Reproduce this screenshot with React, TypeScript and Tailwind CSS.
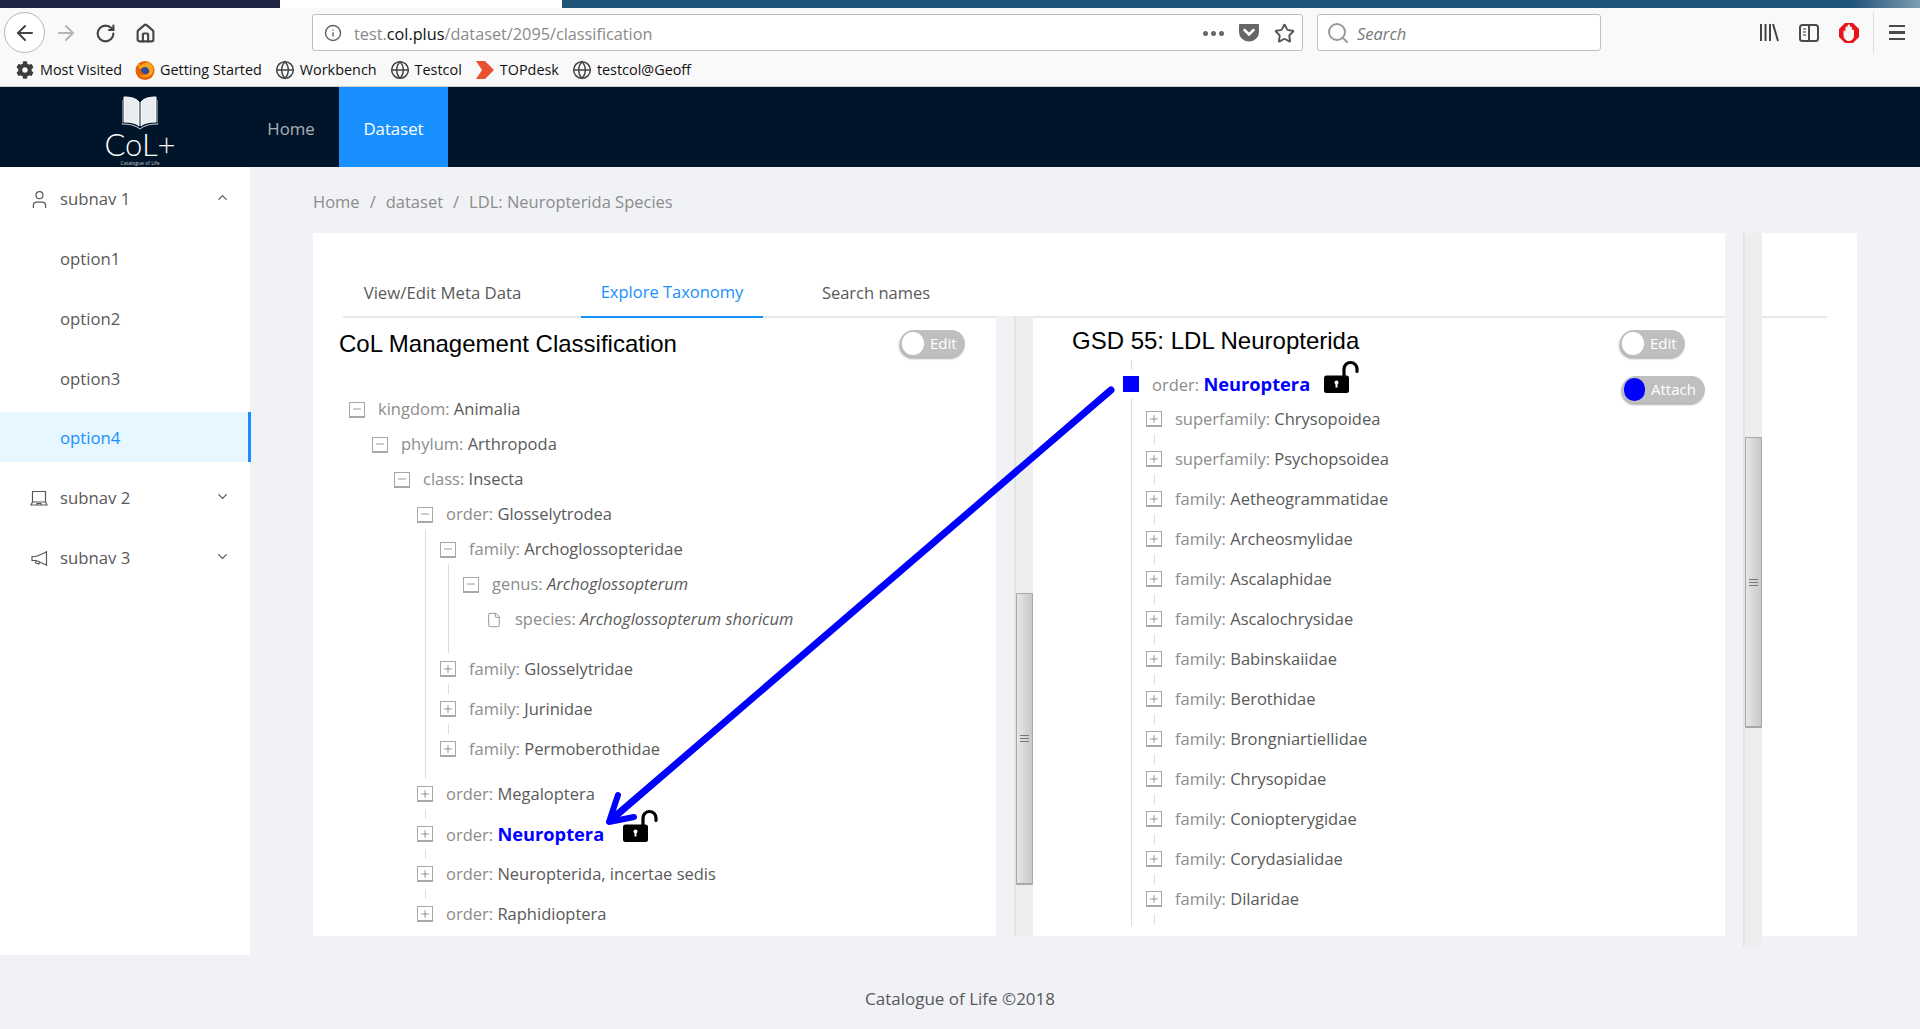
import type { ReactNode } from "react";
import { ArrowLeft, ArrowRight, RotateCw, Home, Info, Search, Star, User, ChevronUp, ChevronDown, File, Globe, Plus, Minus } from "lucide-react";
import { FaCog } from "react-icons/fa";

// 작은 아이콘들
function PocketIcon() {
  return (
    <svg viewBox="0 0 20 18" className="w-5 h-[18px]">
      <path d="M1 0h18a1 1 0 0 1 1 1v7a10 9.5 0 0 1-20 0V1a1 1 0 0 1 1-1z" fill="#666" />
      <path d="M5.5 6l4.5 4.5L14.500 6" fill="none" stroke="#fff" strokeWidth="2.500" strokeLinecap="round" />
    </svg>
  );
}

function FirefoxIcon() {
  return (
    <svg viewBox="0 0 20 20" className="w-5 h-5">
      <circle cx="10" cy="10.500" r="9.500" fill="#e66000" />
      <circle cx="10.500" cy="9.500" r="4.500" fill="#2c4a9e" />
      <path d="M3 3c2 1 2 3 3 3 2-3 6-5 10-2 3 3 3 8 0 11-4 3-9 3-12 0 3 1 8 1 10-2 1-3-1-6-4-6-2 0-3 1-4 2-2 0-3-3-3-6z" fill="#f8a51b" />
    </svg>
  );
}

function TopdeskIcon() {
  return (
    <svg viewBox="0 0 18 18" className="w-[18px] h-[18px]">
      <path d="M0 0h9l9 9-9 9H0l6-9z" fill="#ea5030" />
    </svg>
  );
}

function LibraryIcon() {
  return (
    <svg viewBox="0 0 20 19" className="w-5 h-[19px]" stroke="#444" strokeWidth="2" fill="none">
      <path d="M2 1v17M6.500 1v17M11 1v17M14 1l5 17" />
    </svg>
  );
}

function SidebarIcon() {
  return (
    <svg viewBox="0 0 20 18" className="w-5 h-[18px]" fill="none">
      <rect x="1" y="1" width="18" height="16" rx="2.500" stroke="#4a4a4a" strokeWidth="2" />
      <path d="M10 1v16" stroke="#4a4a4a" strokeWidth="2" />
      <path d="M4 5h3M4 8h3M4 11h3" stroke="#777" strokeWidth="1.500" />
    </svg>
  );
}

function AdblockIcon() {
  return (
    <svg viewBox="0 0 20 20" className="w-5 h-5">
      <path d="M6 0h8l6 6v8l-6 6H6l-6-6V6z" fill="#e8141c" />
      <path d="M4.500 9c0-1 .5-1.500 1-1.500s1 .5 1 1.500V5c0-1 .5-1.500 1-1.500S8.500 4 8.500 5V3c0-1 .5-1.500 1.200-1.500S11 2 11 3v2c0-1 .5-1.500 1-1.500s1 .5 1 1.500v3c0-1 .5-1.500 1-1.500s1 .5 1 1.500v4c0 3.500-2 6-5 6s-5.500-2.500-5.500-6z" fill="#f6f6f6" />
    </svg>
  );
}

function LockOpenIcon() {
  return (
    <svg viewBox="0 0 35 33" className="w-[35px] h-[33px] block">
      <path d="M20 18V9a6.500 6.500 0 0 1 13 0v2.500" fill="none" stroke="#000" strokeWidth="3.200" strokeLinecap="round" />
      <rect x="0" y="15.500" width="25" height="17.500" rx="2.500" fill="#000" />
      <circle cx="12.500" cy="22.500" r="2" fill="#fff" />
      <rect x="11.500" y="22.500" width="2" height="5" fill="#fff" />
    </svg>
  );
}

function BookLogo() {
  return (
    <svg viewBox="0 0 36 34" className="w-9 h-[34px] shrink-0">
      <path d="M2 1c6 0 12 1 15 5v24c-3-3-9-4-15-4z" fill="#e9edf0" stroke="#fff" strokeWidth="1" />
      <path d="M34 1c-6 0-12 1-15 5v24c3-3 9-4 15-4z" fill="#e9edf0" stroke="#fff" strokeWidth="1" />
      <path d="M0 4v24c7 0 13 1 18 5 5-4 11-5 18-5V4" fill="none" stroke="#cfd6da" strokeWidth="1" />
    </svg>
  );
}

function LaptopIcon() {
  return (
    <svg viewBox="0 0 18 16" className="w-[18px] h-4" fill="none" stroke="#595959" strokeWidth="1.200">
      <path d="M2.500 12V1.500h13V12" />
      <path d="M2.500 12L1 15h16l-1.500-3z" />
      <path d="M7 15v-1.500h4V15" />
    </svg>
  );
}

function MegaphoneIcon() {
  return (
    <svg viewBox="0 0 17 17" className="w-[17px] h-[17px]" fill="none" stroke="#595959" strokeWidth="1.200" strokeLinejoin="round">
      <path d="M15.500 1v15M15.500 2L5 6.500H1v4h4l10.500 4.500" />
      <path d="M5 10.500l-.5 2.500 3.500 1 .5-2" />
    </svg>
  );
}

function Bookmark({ icon, label }: { icon: ReactNode; label: string }) {
  return (
    <div className="flex items-center gap-[5px] mr-[13px]">
      <span className="w-5 flex justify-center">{icon}</span>
      <span className="text-[14.400px] text-[#111]">{label}</span>
    </div>
  );
}

function BrowserChrome() {
  const globe = <Globe className="w-5 h-5 text-[#444]" strokeWidth={1.8} />;
  return (
    <div className="bg-[#f9f9fa] shrink-0">
      {/* 제목 표시줄 */}
      <div className="h-2 flex">
        <div className="w-[280px] bg-[#1f2545]" />
        <div className="w-[282px] bg-white" />
        <div className="flex-1 bg-gradient-to-r from-[#1f5378] from-[95%] to-[#7f9db3]" />
      </div>

      {/* 주소창 줄 */}
      <div className="h-[45px] flex items-center relative">
        <div className="w-[41px] h-[41px] ml-1 mt-[4px] rounded-full border border-[#b5b5b5] bg-white flex items-center justify-center">
          <ArrowLeft className="w-6 h-6 text-[#444]" />
        </div>
        <ArrowRight className="w-6 h-6 ml-[9px] mt-[4px] text-[#b5b5b5]" />
        <RotateCw className="w-[21px] h-[21px] ml-[17px] mt-[5px] text-[#444]" strokeWidth={2.4} />
        <Home className="w-[21px] h-[21px] ml-[19px] mt-[5px] text-[#444]" strokeWidth={2.4} />

        <div className="ml-[156px] w-[991px] h-[37px] mt-[4px] bg-white border border-[#bebebe] rounded-[3px] flex items-center pl-[11px] pr-[7px]">
          <Info className="w-[18px] h-[18px] text-[#666]" />
          <div className="ml-3 pt-[3px] text-[16.250px] text-[#8a8a8a] leading-none">
            test.<span className="text-[#111]">col.plus</span>/dataset/2095/classification
          </div>
          <div className="ml-auto pt-[1px] flex items-center gap-[15px]">
            <div className="flex gap-[3px]">
              <span className="w-[5px] h-[5px] rounded-full bg-[#666]" />
              <span className="w-[5px] h-[5px] rounded-full bg-[#666]" />
              <span className="w-[5px] h-[5px] rounded-full bg-[#666]" />
            </div>
            <PocketIcon />
            <Star className="w-[21px] h-[21px] text-[#555]" strokeWidth={2.2} />
          </div>
        </div>

        <div className="ml-[14px] w-[284px] h-[37px] mt-[4px] bg-white border border-[#bebebe] rounded-[3px] flex items-center pl-[8px]">
          <Search className="w-6 h-6 text-[#999]" />
          <span className="ml-[7px] pt-[3px] italic text-[16.500px] text-[#777]">Search</span>
        </div>

        <div className="ml-[158px] flex items-center mt-[4px]">
          <LibraryIcon />
          <div className="ml-5"><SidebarIcon /></div>
          <div className="ml-5"><AdblockIcon /></div>
          <div className="ml-[14px] w-px h-[41px] bg-[#dcdcdc]" />
          <div className="ml-[15px] w-[16px] flex flex-col gap-[4px]">
            <span className="h-[2.500px] bg-[#4a4a4a]" />
            <span className="h-[2.500px] bg-[#4a4a4a]" />
            <span className="h-[2.500px] bg-[#4a4a4a]" />
          </div>
        </div>
      </div>

      {/* 북마크 줄 */}
      <div className="h-[34px] flex items-center pt-[1px] pl-[15px] border-b border-[#cfcfcf]">
        <Bookmark icon={<FaCog className="w-[18px] h-[18px] text-[#3c3c3c]" />} label="Most Visited" />
        <Bookmark icon={<FirefoxIcon />} label="Getting Started" />
        <Bookmark icon={globe} label="Workbench" />
        <Bookmark icon={globe} label="Testcol" />
        <Bookmark icon={<TopdeskIcon />} label="TOPdesk" />
        <Bookmark icon={globe} label="testcol@Geoff" />
      </div>
    </div>
  );
}

function Header() {
  return (
    <div className="h-[80px] bg-[#001529] flex shrink-0 text-[16.750px]">
      <div className="w-[243px] h-[80px] overflow-hidden flex flex-col items-center pl-[37px] pt-[9px]">
        <BookLogo />
        <div className="text-white text-[31px] font-light leading-[28px] font-['Lato',sans-serif]">CoL+</div>
        <div className="mt-[2px] text-[5px] leading-[6px] text-[#c8c8c8]">Catalogue of Life</div>
      </div>
      <div className="w-[96px] pt-[3px] flex items-center justify-center text-white/65">Home</div>
      <div className="w-[109px] pt-[3px] flex items-center justify-center bg-[#1890ff] text-white">Dataset</div>
    </div>
  );
}

function SubNav({ icon, label, up }: { icon: ReactNode; label: string; up?: boolean }) {
  return (
    <div className="h-[60px] flex items-center pl-[30px] pr-[20px] text-[#595959]">
      <span className="w-[18px] flex justify-center mr-3">{icon}</span>
      <span className="flex-1">{label}</span>
      {up ? <ChevronUp className="w-[15px] h-[15px] mb-1" /> : <ChevronDown className="w-[15px] h-[15px] mb-1" />}
    </div>
  );
}

function Sidebar() {
  return (
    <div className="w-[250px] bg-white shrink-0 pt-[2px] text-[16.750px]">
      <SubNav icon={<User className="w-[21px] h-[21px] shrink-0" strokeWidth={1.4} />} label="subnav 1" up />
      <div className="h-[60px] flex items-center pl-[60px] text-[#595959]">option1</div>
      <div className="h-[60px] flex items-center pl-[60px] text-[#595959]">option2</div>
      <div className="h-[60px] flex items-center pl-[60px] text-[#595959]">option3</div>
      <div className="h-[50px] mt-[3px] mb-[6px] w-[251px] pt-[1px] flex items-center pl-[60px] text-[#1890ff] bg-[#e6f7ff] border-r-[3px] border-[#1890ff]">option4</div>
      <SubNav icon={<LaptopIcon />} label="subnav 2" />
      <SubNav icon={<MegaphoneIcon />} label="subnav 3" />
    </div>
  );
}

function TreeBox({ open }: { open?: boolean }) {
  return (
    <span className="w-4 h-4 shrink-0 bg-white border border-[#a8a8a8] border-b-2 flex items-center justify-center">
      {open ? <Minus className="w-3 h-3 text-[#777]" strokeWidth={1.5} /> : <Plus className="w-3 h-3 text-[#777]" strokeWidth={1.5} />}
    </span>
  );
}

function Label({ rank, name, italic, bold }: { rank: string; name: string; italic?: boolean; bold?: boolean }) {
  return (
    <span className="whitespace-nowrap">
      <span className="text-[#8c8c8c]">{rank}: </span>
      <span className={bold ? "text-[#0000ff] font-bold text-[18.250px]" : italic ? "text-[#595959] italic" : "text-[#595959]"}>{name}</span>
    </span>
  );
}

// 펼쳐진 노드 (35px)
function OpenRow({ rank, name, italic }: { rank: string; name: string; italic?: boolean }) {
  return (
    <div className="h-[35px] flex items-center gap-[13px]">
      <TreeBox open />
      <Label rank={rank} name={name} italic={italic} />
    </div>
  );
}

// 접힌 노드 + 아래 연결선 (40px)
function ClosedRow({ rank, name, bold, lock, last }: { rank: string; name: string; bold?: boolean; lock?: boolean; last?: boolean }) {
  return (
    <div>
      <div className="h-[30px] flex items-center gap-[13px]">
        <TreeBox />
        <Label rank={rank} name={name} bold={bold} />
        {lock && <div className="ml-[6px] mb-[17px]"><LockOpenIcon /></div>}
      </div>
      {!last && <div className="h-[10px] w-px ml-2 bg-[#dcdcdc]" />}
    </div>
  );
}

function Toggle({ label, on, width }: { label: string; on?: boolean; width: string }) {
  return (
    <div className={`${width} h-[27px] rounded-full bg-[#bfbfbf] flex items-center pl-[2px] shadow-[-1px_2px_2px_rgba(0,0,0,0.3)]`}>
      <span className={on ? "w-[21px] h-[23px] rounded-full bg-[#0000ff]" : "w-[22px] h-[23px] rounded-full bg-white"} />
      <span className="ml-[6px] text-[15px] text-white">{label}</span>
    </div>
  );
}

function Scrollbar({ top, height }: { top: string; height: string }) {
  return (
    <div className={`w-full ${top} ${height} border border-[#a8a8a8] border-b-2 rounded-[1px] bg-gradient-to-r from-[#e6e6e6] to-[#c8c8c8] flex flex-col items-center justify-center gap-[2px]`}>
      <span className="w-[9px] h-px bg-[#777]" />
      <span className="w-[9px] h-px bg-[#777]" />
      <span className="w-[9px] h-px bg-[#777]" />
    </div>
  );
}

function LeftPanel() {
  return (
    <div className="w-[683px] h-full overflow-hidden shrink-0">
      <div className="h-[74px] flex justify-between items-start pl-[26px] pr-[31px] pt-3">
        <h2 className="font-['Liberation_Sans',sans-serif] text-[24px] leading-[28px] text-black">CoL Management Classification</h2>
        <Toggle label="Edit" width="w-[65px]" />
      </div>
      <div className="pl-[36px]">
        <OpenRow rank="kingdom" name="Animalia" />
        <div className="pl-[23px]">
          <OpenRow rank="phylum" name="Arthropoda" />
          <div className="pl-[22px]">
            <OpenRow rank="class" name="Insecta" />
            <div className="pl-[23px]">
              <OpenRow rank="order" name="Glosselytrodea" />
              <div className="ml-2 -mt-[3px] pt-[3px] pb-[15px] pl-[14px] border-l border-[#dcdcdc]">
                <OpenRow rank="family" name="Archoglossopteridae" />
                <div className="ml-2 -mt-[3px] pt-[3px] pb-[16px] pl-[14px] border-l border-[#dcdcdc]">
                  <OpenRow rank="genus" name="Archoglossopterum" italic />
                  <div className="h-[35px] pl-[23px] flex items-center gap-[13px]">
                    <File className="w-4 h-[18px] shrink-0 text-[#888]" strokeWidth={1.3} />
                    <Label rank="species" name="Archoglossopterum shoricum" italic />
                  </div>
                </div>
                <div className="h-px" />
                <ClosedRow rank="family" name="Glosselytridae" />
                <ClosedRow rank="family" name="Jurinidae" />
                <ClosedRow rank="family" name="Permoberothidae" last />
              </div>
              <ClosedRow rank="order" name="Megaloptera" />
              <ClosedRow rank="order" name="Neuroptera" bold lock />
              <ClosedRow rank="order" name="Neuropterida, incertae sedis" />
              <ClosedRow rank="order" name="Raphidioptera" last />
            </div>
          </div>
        </div>
      </div>
    </div>
  );
}

const gsdRows: [string, string][] = [
  ["superfamily", "Chrysopoidea"],
  ["superfamily", "Psychopsoidea"],
  ["family", "Aetheogrammatidae"],
  ["family", "Archeosmylidae"],
  ["family", "Ascalaphidae"],
  ["family", "Ascalochrysidae"],
  ["family", "Babinskaiidae"],
  ["family", "Berothidae"],
  ["family", "Brongniartiellidae"],
  ["family", "Chrysopidae"],
  ["family", "Coniopterygidae"],
  ["family", "Corydasialidae"],
  ["family", "Dilaridae"],
];

function RightPanel() {
  return (
    <div className="w-[692px] h-full overflow-hidden shrink-0 flex">
      <div className="w-[587px]">
        <div className="h-[42px] pl-[39px] pt-[9px]">
          <h2 className="font-['Liberation_Sans',sans-serif] text-[24px] leading-[28px] text-black whitespace-nowrap">GSD 55: LDL Neuropterida</h2>
        </div>
        <div className="ml-[98px] w-px h-[10px] bg-[#dcdcdc]" />
        <div className="h-[28px] pl-[90px] flex items-center">
          <span className="w-4 h-4 bg-[#0000ff] shrink-0" />
          <span className="ml-[13px]"><Label rank="order" name="Neuroptera" bold /></span>
          <div className="ml-[14px] mb-[16px]"><LockOpenIcon /></div>
        </div>
        <div className="ml-[98px] pt-[6px] pb-[2px] pl-[14px] border-l border-[#dcdcdc]">
          {gsdRows.map(([rank, name]) => (
            <ClosedRow key={name} rank={rank} name={name} />
          ))}
        </div>
      </div>
      <div className="flex flex-col gap-[19px] pt-3">
        <Toggle label="Edit" width="w-[65px]" />
        <div className="ml-[2px]"><Toggle label="Attach" on width="w-[83px]" /></div>
      </div>
    </div>
  );
}

function Card() {
  return (
    <div className="h-[703px] bg-white relative flex flex-col">
      {/* 탭 */}
      <div className="h-[85px] mx-[30px] shrink-0 flex items-end border-b-2 border-[#e8e8e8]">
        <div className="h-[50px] -mb-[2px] w-[199px] flex items-center justify-center text-[16.750px] text-[#595959]">View/Edit Meta Data</div>
        <div className="h-[50px] -mb-[2px] w-[182px] ml-[39px] flex items-center justify-center text-[#1890ff] border-b-2 border-[#1890ff]">Explore Taxonomy</div>
        <div className="h-[50px] -mb-[2px] w-[148px] ml-[39px] flex items-center justify-center text-[#595959]">Search names</div>
      </div>

      <div className="flex-1 min-h-0 flex">
        <LeftPanel />
        <div className="w-[18px] -mt-[2px] bg-[#f0f2f5] shrink-0" />
        <div className="w-[19px] -mt-[2px] bg-[#eeeeee] border-l-2 border-[#e4e4e4] shrink-0">
          <Scrollbar top="mt-[277px]" height="h-[292px]" />
        </div>
        <RightPanel />
      </div>

      {/* 오른쪽 스크롤바: 카드 위로 겹쳐서 아래로 삐져나옴 */}
      <div className="absolute left-[1412px] top-0 h-[703px] w-[18px] bg-[#f0f2f5]" />
      <div className="absolute left-[1430px] top-0 h-[714px] w-[19px] bg-[#eeeeee] border-l-2 border-[#e4e4e4]">
        <Scrollbar top="mt-[204px]" height="h-[291px]" />
      </div>
    </div>
  );
}

export default function App() {
  return (
    <div className="relative w-[1920px] h-[1029px] overflow-hidden bg-[#f0f2f5] flex flex-col font-['Open_Sans',sans-serif] text-[16.500px] select-none">
      <BrowserChrome />
      <Header />

      <div className="h-[788px] flex shrink-0">
        <Sidebar />
        <div className="flex-1 px-[63px]">
          <div className="h-[66px] pt-1 flex items-center gap-[10px] text-[#8c8c8c]">
            <span>Home</span>
            <span>/</span>
            <span>dataset</span>
            <span>/</span>
            <span>LDL: Neuropterida Species</span>
          </div>
          <Card />
        </div>
      </div>

      <div className="flex-1 flex items-center justify-center pt-[14px] text-[17px] text-[#595959]">Catalogue of Life ©2018</div>

      {/* 파란 화살표 */}
      <svg className="absolute left-[600px] top-[380px] w-[520px] h-[450px] blur-[0.7px]" viewBox="0 0 520 450" fill="none" stroke="#0000ff" strokeLinecap="round">
        <path d="M511 10L12 439" strokeWidth="7" />
        <path d="M18 415L9 442L34 437" strokeWidth="6" strokeLinejoin="round" />
      </svg>
    </div>
  );
}
